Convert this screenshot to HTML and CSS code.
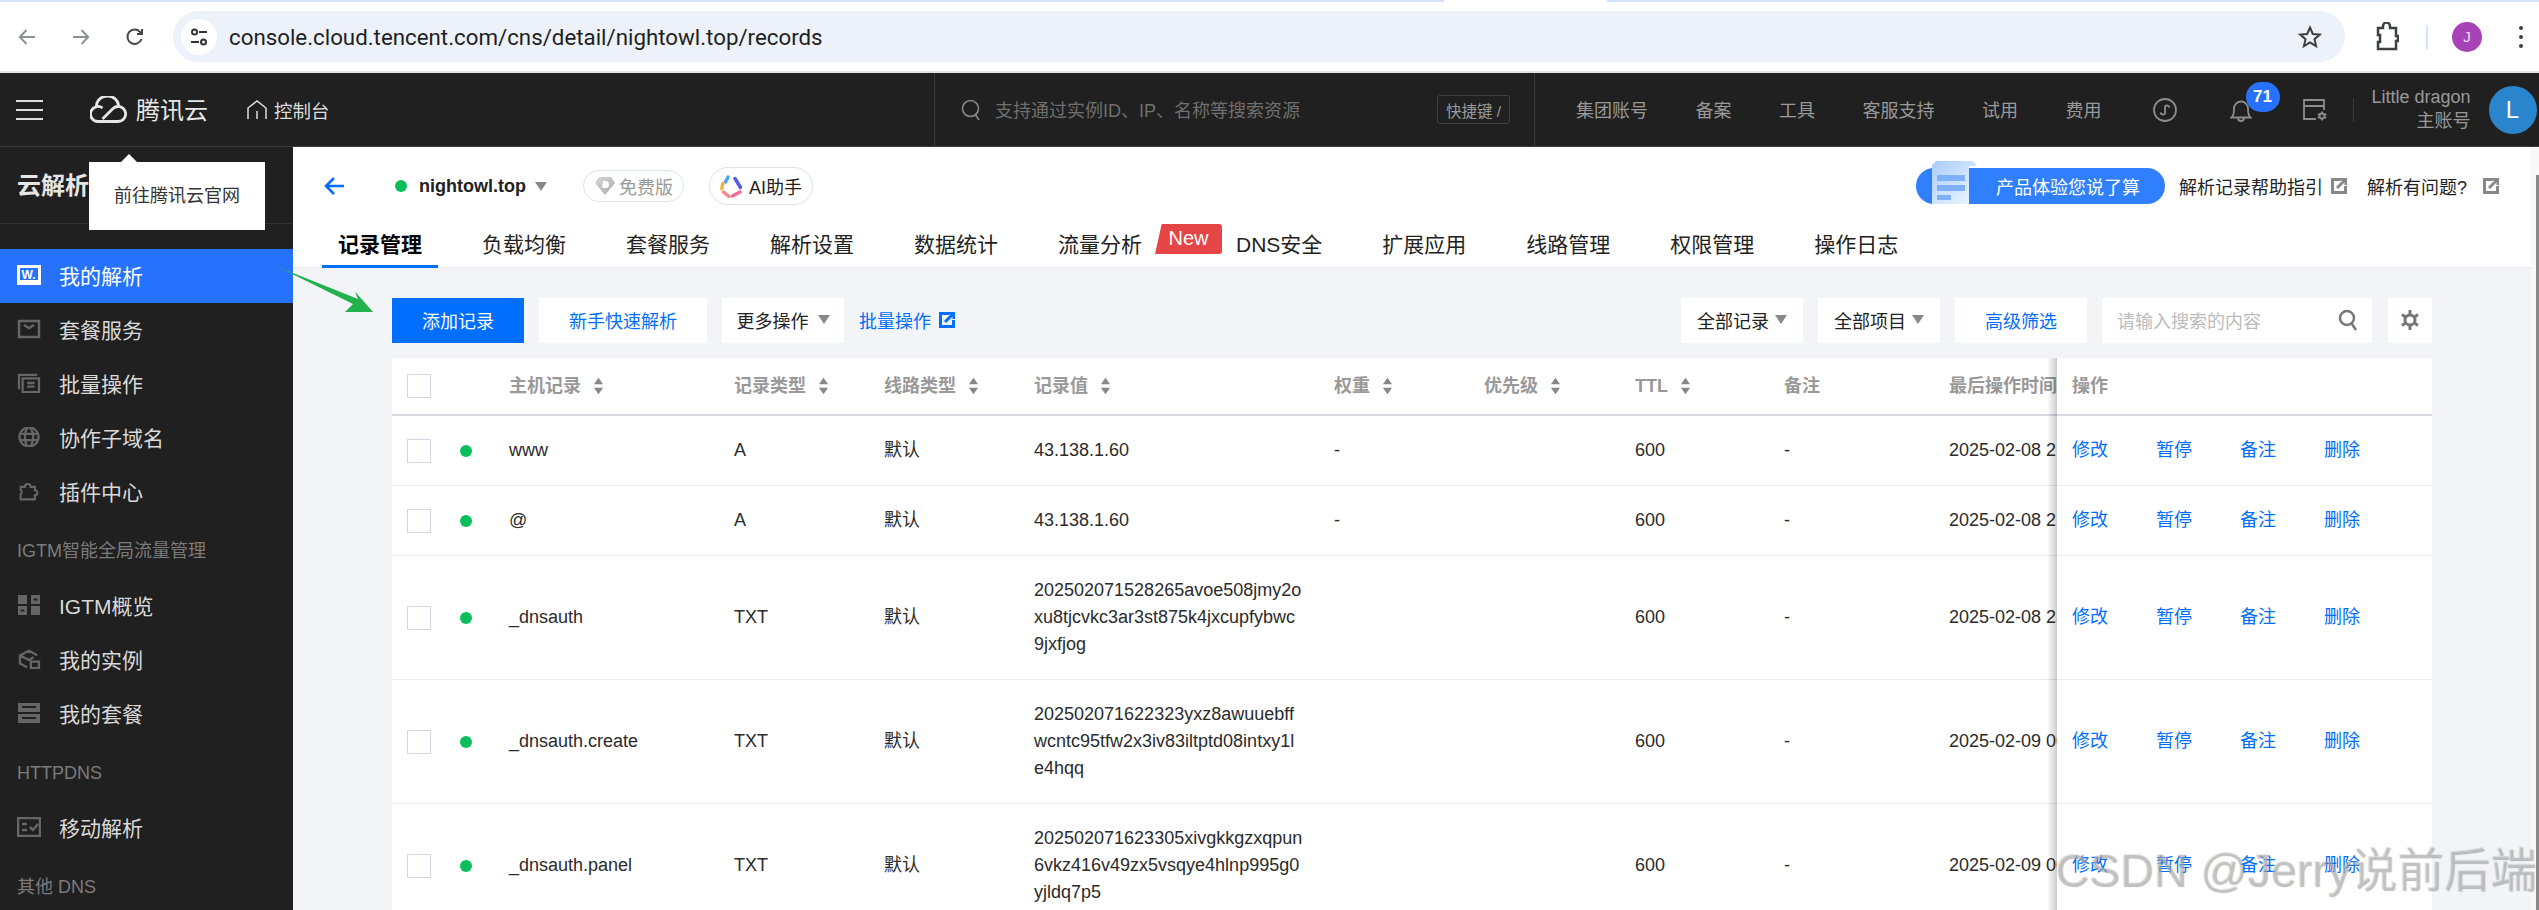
FILE: index.html
```html
<!DOCTYPE html>
<html lang="zh-CN">
<head>
    <meta charset="UTF-8">
    <title>nightowl.top - 云解析</title>
    <link rel="stylesheet" href="styles.css">
</head>
<body>
    <!-- browser chrome -->
    <div class="chrome">
        <div class="tabstrip"><span class="strip-a"></span><span class="strip-b"></span></div>
        <div class="browserbar">
            <svg class="nav-ico" viewBox="0 0 20 20"><path d="M18 10H3M9.500 3 2.800 10l6.700 7" stroke="#8e9094"/></svg>
            <svg class="nav-ico fwd" viewBox="0 0 20 20"><path d="M2 10h15M10.500 3l6.700 7-6.700 7" stroke="#8e9094"/></svg>
            <svg class="nav-ico reload" viewBox="0 0 20 20"><path d="M16.500 12a7.200 7.200 0 1 1-1.700-7.300L17 7M17 2v5h-5" stroke="#45474a"/></svg>
            <div class="omnibox">
                <span class="tune">
                    <svg viewBox="0 0 20 20" width="20" height="20"><circle cx="5.500" cy="5" r="2.500"/><path d="M10 5h8M2 15h8"/><circle cx="14.500" cy="15" r="2.500"/></svg>
                </span>
                <span class="url">console.cloud.tencent.com/cns/detail/nightowl.top/records</span>
                <svg class="star" viewBox="0 0 24 24"><path d="m12 2.500 2.800 6.500 7 .6-5.300 4.600 1.600 6.900-6.100-3.700-6.100 3.700 1.600-6.900L2.200 9.600l7-.6z"/></svg>
            </div>
            <svg class="puzzle" viewBox="0 0 24 30"><path d="M3 6h5V4a3 3 0 0 1 7 0v2h6v8h2v5h-2v8H3v-7h2v-7H3z"/></svg>
            <span class="bar-div"></span>
            <span class="profile">J</span>
            <span class="dots"><i></i><i></i><i></i></span>
        </div>
    </div>

    <!-- console header -->
    <header class="topnav">
        <div class="topnav-left">
            <span class="burger"><i></i><i></i><i></i></span>
            <svg class="logo" viewBox="0 0 37 27"><path d="M8 25.500H28A7.500 7.500 0 1 0 23 12.500L12.500 23M8 25.500A7.500 7.500 0 1 1 12.500 12M6.500 10.500A10.500 9.500 0 0 1 28.500 9.500"/></svg>
            <span class="brand">腾讯云</span>
            <svg class="home" viewBox="0 0 20 20"><path d="M1 19V8l9-7 9 7v11M10 11v8"/></svg>
            <span class="console-link">控制台</span>
        </div>
        <div class="topsearch">
            <svg class="search-ico" viewBox="0 0 20 22"><circle cx="9.500" cy="9.500" r="8"/><path d="m14.500 16 3.500 5"/></svg>
            <span class="topsearch-text">支持通过实例ID、IP、名称等搜索资源</span>
            <span class="kbd">快捷键 /</span>
        </div>
        <nav class="topmenu">
            <a>集团账号</a><a>备案</a><a>工具</a><a>客服支持</a><a>试用</a><a>费用</a>
        </nav>
        <svg class="mini-ico" viewBox="0 0 24 24"><circle cx="12" cy="12" r="11"/><path d="M7.500 14.500a2.500 2.500 0 0 0 4.500 1V8.500a2.500 2.500 0 0 1 4.500 1"/></svg>
        <span class="bell">
            <svg viewBox="0 0 22 26" width="22" height="26"><path d="M1.500 20.500c2-1.500 2.500-4 2.500-9a7 7 0 0 1 14 0c0 5 .5 7.500 2.500 9zM8 21a3 3 0 0 0 6 0"/></svg>
            <b class="badge">71</b>
        </span>
        <svg class="cog-box" viewBox="0 0 24 22"><path d="M13 20H1V1h20v10M1 7h20"/><circle cx="19" cy="17" r="2.500"/><path d="M19 12.500v2M19 19.500v2M14.800 15l1.800 1M23.200 15l-1.800 1M14.800 19l1.800-1M23.200 19l-1.800-1"/></svg>
        <span class="user-div"></span>
        <div class="user">
            <span>Little dragon</span>
            <span>主账号</span>
        </div>
        <span class="avatar">L</span>
    </header>

    <div class="layout">
        <aside class="sidebar">
            <div class="side-title">云解析</div>
            <ul class="side-list">
                <li class="side-item active">
                    <svg class="side-ico" viewBox="0 0 24 20"><rect width="24" height="20" fill="#fff"/><rect x="3" y="3" width="18" height="12" fill="#2672ff"/><text x="4.500" y="13.500" font-size="12" font-weight="700" fill="#fff" font-family="Liberation Sans">W.</text></svg>
                    我的解析
                </li>
                <li class="side-item">
                    <svg class="side-ico line" viewBox="0 0 24 20"><path d="M2 2h20v16H2zM7 6l5 3 5-3"/></svg>
                    套餐服务
                </li>
                <li class="side-item">
                    <svg class="side-ico line" viewBox="0 0 24 22"><path d="M1 18V2h20M5 6h18v15H5zM10 11h8M10 15h8"/></svg>
                    批量操作
                </li>
                <li class="side-item">
                    <svg class="side-ico line" viewBox="0 0 24 22"><circle cx="12" cy="11" r="10.500"/><ellipse cx="12" cy="11" rx="4.500" ry="10.500"/><path d="M2 7.500h20M2 14.500h20"/></svg>
                    协作子域名
                </li>
                <li class="side-item">
                    <svg class="side-ico line" viewBox="0 0 24 24"><path d="M2 7h5a3.500 3.500 0 0 1 7 0h5v4a3 3 0 0 1 0 6v5H2v-6a3 3 0 0 0 0-5z"/></svg>
                    插件中心
                </li>
                <li class="side-section">IGTM智能全局流量管理</li>
                <li class="side-item">
                    <svg class="side-ico fill" viewBox="0 0 24 20"><path fill-rule="evenodd" d="M1 0h9v9H1zM14 0h9v9h-9zM1 11h9v9H1zM14 11h9v9h-9zM16.500 3.500h4v2h-4zM3.500 14.500h4v2h-4z"/></svg>
                    IGTM概览
                </li>
                <li class="side-item">
                    <svg class="side-ico line" viewBox="0 0 24 22"><path d="M10 20 2 16V7l10-5 9 5M2 7l10 5 5-3M14 14h9v7h-9z"/></svg>
                    我的实例
                </li>
                <li class="side-item">
                    <svg class="side-ico fill" viewBox="0 0 24 20"><path d="M1 0h22v9H1zM1 11h22v9H1z"/><path d="M5 4h14M5 15h14" stroke="#202020" stroke-width="2"/></svg>
                    我的套餐
                </li>
                <li class="side-section">HTTPDNS</li>
                <li class="side-item">
                    <svg class="side-ico line" viewBox="0 0 24 20"><path d="M1 1h22v18H1zM5 7h5M5 13h5M13 10l3 3 5-6"/></svg>
                    移动解析
                </li>
                <li class="side-section">其他 DNS</li>
            </ul>
        </aside>

        <main class="content">
            <section class="panel">
                <div class="panel-top">
                    <svg class="back" viewBox="0 0 22 20"><path d="M21 10H3M11 2l-8 8 8 8"/></svg>
                    <span class="status-dot domain-dot"></span>
                    <strong class="domain">nightowl.top</strong>
                    <span class="caret"></span>
                    <span class="pill free">
                        <svg viewBox="0 0 22 20" width="22" height="20"><defs><linearGradient id="gem" x1="0" y1="0" x2="1" y2="1"><stop offset="0" stop-color="#d8d8d8"/><stop offset="1" stop-color="#a8a8a8"/></linearGradient></defs><path d="M5 1h12l4 6-10 12L1 7z" fill="url(#gem)"/><path d="M9 5h2.500a3.500 3.500 0 0 1 0 7H8z" fill="#fff"/></svg>
                        免费版
                    </span>
                    <span class="pill ai">
                        <svg viewBox="0 0 23 23" width="23" height="23" fill="none" stroke-width="3.500" stroke-linecap="round"><path d="M8 2 5.500 7" stroke="#4aa8f0"/><path d="m15 3.500 5.500 9" stroke="#5a5ae6"/><path d="m20 17-7.500 4" stroke="#f06a9a"/><path d="M9 21.500 3.500 17" stroke="#f58a8a"/><path d="m1.800 13.500 1-5" stroke="#f5b23c"/></svg>
                        AI助手
                    </span>
                    <div class="panel-links">
                        <span class="promo">
                            <svg class="promo-doc" viewBox="0 0 44 43"><defs><linearGradient id="docg" x1="0" y1="0" x2="1" y2="1"><stop offset="0" stop-color="#a9cdff"/><stop offset="1" stop-color="#f0f6ff"/></linearGradient></defs><path d="M4 0h34c4 0 6 2 6 5h-7v38H0V4z" fill="url(#docg)"/><path d="M5 14h28v6H5zM5 24h28v6H5zM5 34h14v5H5z" fill="#7fb0fb"/></svg>
                            产品体验您说了算
                        </span>
                        <a class="help">解析记录帮助指引<svg class="ext" viewBox="0 0 16 16"><path d="M10 1.500H1.500v13h13V8M6 10l8-8M9 1h6v6"/></svg></a>
                        <a class="help">解析有问题?<svg class="ext" viewBox="0 0 16 16"><path d="M10 1.500H1.500v13h13V8M6 10l8-8M9 1h6v6"/></svg></a>
                    </div>
                </div>
                <div class="tabs">
                    <a class="tab current">记录管理</a>
                    <a class="tab">负载均衡</a>
                    <a class="tab">套餐服务</a>
                    <a class="tab">解析设置</a>
                    <a class="tab">数据统计</a>
                    <a class="tab has-new">流量分析<span class="new-flag">New</span></a>
                    <a class="tab">DNS安全</a>
                    <a class="tab">扩展应用</a>
                    <a class="tab">线路管理</a>
                    <a class="tab">权限管理</a>
                    <a class="tab">操作日志</a>
                </div>
            </section>

            <div class="toolbar">
                <button class="btn primary w-add">添加记录</button>
                <button class="btn link w-quick">新手快速解析</button>
                <button class="btn w-more">更多操作<span class="caret"></span></button>
                <a class="batch">批量操作<svg class="ext blue" viewBox="0 0 16 16"><path d="M10 1.500H1.500v13h13V8M6 10l8-8M9 1h6v6"/></svg></a>
                <div class="toolbar-right">
                    <button class="btn w-sel">全部记录<span class="caret"></span></button>
                    <button class="btn w-sel">全部项目<span class="caret"></span></button>
                    <button class="btn link w-adv">高级筛选</button>
                    <div class="searchbox">
                        <span>请输入搜索的内容</span>
                        <svg viewBox="0 0 20 22" width="20" height="22"><circle cx="9" cy="9" r="7"/><path d="m14 15 4 6"/></svg>
                    </div>
                    <button class="btn w-gear">
                        <svg viewBox="0 0 20 22" width="20" height="22"><path d="M10 1v4M10 17v4M2 5.500 5.500 8M18 5.500 14.500 8M2 16.500 5.500 14M18 16.500 14.500 14"/><circle cx="10" cy="11" r="5"/></svg>
                    </button>
                </div>
            </div>

            <div class="records">
                <div class="row head">
                    <div class="cell"><span class="check"></span></div>
                    <div class="cell"></div>
                    <div class="cell">主机记录<svg class="sort" viewBox="0 0 12 20"><path d="M6 1l5 7H1zM6 19l-5-7h10z"/></svg></div>
                    <div class="cell">记录类型<svg class="sort" viewBox="0 0 12 20"><path d="M6 1l5 7H1zM6 19l-5-7h10z"/></svg></div>
                    <div class="cell">线路类型<svg class="sort" viewBox="0 0 12 20"><path d="M6 1l5 7H1zM6 19l-5-7h10z"/></svg></div>
                    <div class="cell">记录值<svg class="sort" viewBox="0 0 12 20"><path d="M6 1l5 7H1zM6 19l-5-7h10z"/></svg></div>
                    <div class="cell">权重<svg class="sort" viewBox="0 0 12 20"><path d="M6 1l5 7H1zM6 19l-5-7h10z"/></svg></div>
                    <div class="cell">优先级<svg class="sort" viewBox="0 0 12 20"><path d="M6 1l5 7H1zM6 19l-5-7h10z"/></svg></div>
                    <div class="cell">TTL<svg class="sort" viewBox="0 0 12 20"><path d="M6 1l5 7H1zM6 19l-5-7h10z"/></svg></div>
                    <div class="cell">备注</div>
                    <div class="cell clip">最后操作时间</div>
                    <div class="cell op">操作</div>
                </div>

                <div class="row">
                    <div class="cell"><span class="check"></span></div>
                    <div class="cell"><span class="status-dot"></span></div>
                    <div class="cell">www</div>
                    <div class="cell">A</div>
                    <div class="cell">默认</div>
                    <div class="cell val">43.138.1.60</div>
                    <div class="cell">-</div>
                    <div class="cell"></div>
                    <div class="cell">600</div>
                    <div class="cell">-</div>
                    <div class="cell clip">2025-02-08 21:30:12</div>
                    <div class="cell op"><a>修改</a><a>暂停</a><a>备注</a><a>删除</a></div>
                </div>
                <div class="row">
                    <div class="cell"><span class="check"></span></div>
                    <div class="cell"><span class="status-dot"></span></div>
                    <div class="cell">@</div>
                    <div class="cell">A</div>
                    <div class="cell">默认</div>
                    <div class="cell val">43.138.1.60</div>
                    <div class="cell">-</div>
                    <div class="cell"></div>
                    <div class="cell">600</div>
                    <div class="cell">-</div>
                    <div class="cell clip">2025-02-08 21:30:12</div>
                    <div class="cell op"><a>修改</a><a>暂停</a><a>备注</a><a>删除</a></div>
                </div>
                <div class="row">
                    <div class="cell"><span class="check"></span></div>
                    <div class="cell"><span class="status-dot"></span></div>
                    <div class="cell">_dnsauth</div>
                    <div class="cell">TXT</div>
                    <div class="cell">默认</div>
                    <div class="cell val">202502071528265avoe508jmy2o<br>xu8tjcvkc3ar3st875k4jxcupfybwc<br>9jxfjog</div>
                    <div class="cell"></div>
                    <div class="cell"></div>
                    <div class="cell">600</div>
                    <div class="cell">-</div>
                    <div class="cell clip">2025-02-08 23:28:40</div>
                    <div class="cell op"><a>修改</a><a>暂停</a><a>备注</a><a>删除</a></div>
                </div>
                <div class="row">
                    <div class="cell"><span class="check"></span></div>
                    <div class="cell"><span class="status-dot"></span></div>
                    <div class="cell">_dnsauth.create</div>
                    <div class="cell">TXT</div>
                    <div class="cell">默认</div>
                    <div class="cell val">202502071622323yxz8awuuebff<br>wcntc95tfw2x3iv83iltptd08intxy1l<br>e4hqq</div>
                    <div class="cell"></div>
                    <div class="cell"></div>
                    <div class="cell">600</div>
                    <div class="cell">-</div>
                    <div class="cell clip">2025-02-09 00:22:51</div>
                    <div class="cell op"><a>修改</a><a>暂停</a><a>备注</a><a>删除</a></div>
                </div>
                <div class="row">
                    <div class="cell"><span class="check"></span></div>
                    <div class="cell"><span class="status-dot"></span></div>
                    <div class="cell">_dnsauth.panel</div>
                    <div class="cell">TXT</div>
                    <div class="cell">默认</div>
                    <div class="cell val">202502071623305xivgkkgzxqpun<br>6vkz416v49zx5vsqye4hlnp995g0<br>yjldq7p5</div>
                    <div class="cell"></div>
                    <div class="cell"></div>
                    <div class="cell">600</div>
                    <div class="cell">-</div>
                    <div class="cell clip">2025-02-09 00:23:33</div>
                    <div class="cell op"><a>修改</a><a>暂停</a><a>备注</a><a>删除</a></div>
                </div>
            </div>
        </main>
        <div class="scrollbar"></div>
    </div>

    <!-- things lying over the page -->
    <div class="tooltip">前往腾讯云官网</div>
    <svg class="green-arrow" viewBox="0 0 95 45"><path d="M0 0 80 32 77 24.600 95 45H67L75 37z"/></svg>
    <div class="watermark">CSDN @Jerry说前后端</div>
</body>
</html>
```

FILE: styles.css
```css
* {
    box-sizing: border-box;
}

html, body {
    margin: 0;
    height: 910px;
    overflow: hidden;
}

body {
    font-family: "Liberation Sans", "Noto Sans CJK SC", sans-serif;
    font-size: 18px;
    color: #222;
    background: #f2f4f8;
    display: flex;
    flex-direction: column;
}

ul {
    list-style: none;
    margin: 0;
    padding: 0;
}

svg {
    flex: none;
}

/* browser chrome */
.chrome {
    height: 73px;
    flex: none;
    background: #fff;
    border-bottom: 2px solid #e3e3e3;
}

.tabstrip {
    height: 2px;
    display: flex;
    justify-content: space-between;
}

.strip-a {
    width: 1444px;
    background: #d3e3fd;
}

.strip-b {
    width: 932px;
    background: #d3e3fd;
}

.browserbar {
    height: 69px;
    display: flex;
    align-items: center;
    padding-left: 17px;
}

.nav-ico {
    width: 20px;
    height: 20px;
    fill: none;
    stroke-width: 2;
}

.fwd {
    margin-left: 34px;
}

.reload {
    margin-left: 34px;
}

.omnibox {
    width: 2172px;
    height: 51px;
    margin-left: 28px;
    padding: 0 23px 0 8px;
    background: #ecf1fa;
    border-radius: 26px;
    display: flex;
    align-items: center;
}

.tune {
    width: 36px;
    height: 36px;
    background: #fff;
    border-radius: 50%;
    display: flex;
    align-items: center;
    justify-content: center;
}

.tune svg {
    fill: none;
    stroke: #333;
    stroke-width: 2;
}

.url {
    margin-left: 12px;
    font-family: Roboto, sans-serif;
    font-size: 22.300px;
    color: #1f1f1f;
}

.star {
    width: 24px;
    height: 24px;
    margin-left: auto;
    fill: none;
    stroke: #3c3f43;
    stroke-width: 2;
}

.puzzle {
    width: 24px;
    height: 30px;
    margin-left: 30px;
    fill: none;
    stroke: #3c3f43;
    stroke-width: 2.500;
}

.bar-div {
    width: 2px;
    height: 24px;
    margin-left: 27px;
    background: #d3e3fd;
}

.profile {
    width: 30px;
    height: 30px;
    margin-left: 24px;
    border-radius: 50%;
    background: #a742b9;
    color: #f2d8f5;
    font-size: 15px;
    display: flex;
    align-items: center;
    justify-content: center;
}

.dots {
    margin-left: 37px;
    display: flex;
    flex-direction: column;
    gap: 5px;
}

.dots i {
    width: 4px;
    height: 4px;
    border-radius: 50%;
    background: #3c3f43;
}

/* console header */
.topnav {
    height: 74px;
    flex: none;
    background: #202020;
    border-bottom: 1px solid #3a3a3a;
    color: #999;
    display: flex;
    align-items: center;
}

.topnav-left {
    width: 934px;
    padding-left: 16px;
    display: flex;
    align-items: center;
}

.burger {
    width: 27px;
    display: flex;
    flex-direction: column;
    gap: 7px;
}

.burger i {
    height: 2px;
    background: #ddd;
}

.logo {
    width: 37px;
    height: 27px;
    margin-left: 47px;
    fill: none;
    stroke: #e6e6e6;
    stroke-width: 2.800;
}

.brand {
    margin-left: 9px;
    padding-bottom: 2px;
    font-size: 24px;
    color: #e6e6e6;
}

.home {
    width: 20px;
    height: 20px;
    margin-left: 39px;
    fill: none;
    stroke: #ddd;
    stroke-width: 1.500;
}

.console-link {
    margin-left: 7px;
    font-size: 18.500px;
    color: #ddd;
}

.topsearch {
    width: 601px;
    height: 100%;
    padding: 0 24px 0 26px;
    border-left: 1px solid #3a3a3a;
    border-right: 1px solid #3a3a3a;
    display: flex;
    align-items: center;
}

.search-ico {
    width: 20px;
    height: 22px;
    fill: none;
    stroke: #888;
    stroke-width: 1.600;
}

.topsearch-text {
    margin-left: 14px;
    padding-bottom: 2px;
    color: #6f6f6f;
}

.kbd {
    margin-left: auto;
    width: 73px;
    height: 29px;
    border: 1px solid #3f3f3f;
    border-radius: 3px;
    font-size: 15.500px;
    color: #999;
    display: flex;
    align-items: center;
    justify-content: center;
}

.topmenu {
    margin-left: 41px;
    padding-bottom: 2px;
    display: flex;
    gap: 47.500px;
}

.mini-ico {
    width: 24px;
    height: 24px;
    margin-left: 51px;
    fill: none;
    stroke: #8c8c8c;
    stroke-width: 1.800;
}

.bell {
    margin-left: 53px;
    position: relative;
    display: flex;
}

.bell svg {
    fill: none;
    stroke: #8c8c8c;
    stroke-width: 1.800;
}

.badge {
    position: absolute;
    left: 16px;
    top: -15px;
    width: 34px;
    height: 30px;
    border-radius: 15px;
    background: #2672ff;
    color: #fff;
    font-size: 17px;
    display: flex;
    align-items: center;
    justify-content: center;
}

.cog-box {
    width: 24px;
    height: 22px;
    margin-left: 51px;
    fill: none;
    stroke: #8c8c8c;
    stroke-width: 1.800;
}

.user-div {
    width: 1px;
    height: 24px;
    margin-left: 26px;
    background: #3a3a3a;
}

.user {
    width: 100px;
    margin-left: 17px;
    display: flex;
    flex-direction: column;
    align-items: flex-end;
    gap: 5px;
    line-height: 19px;
    white-space: nowrap;
}

.avatar {
    width: 48px;
    height: 48px;
    margin-left: 18px;
    border-radius: 50%;
    background: #2a85cc;
    color: #fff;
    font-size: 24px;
    display: flex;
    align-items: center;
    justify-content: center;
}

/* below the header */
.layout {
    flex: 1;
    min-height: 0;
    display: flex;
}

.sidebar {
    width: 293px;
    flex: none;
    background: #202020;
    color: #d9d9d9;
    font-size: 21px;
}

.side-title {
    height: 77px;
    padding-left: 17px;
    border-bottom: 1px solid #333;
    font-size: 24px;
    font-weight: 700;
    line-height: 78px;
    color: #e6e6e6;
}

.side-list {
    padding-top: 25px;
}

.side-item {
    height: 54px;
    padding-left: 17px;
    padding-bottom: 2px;
    display: flex;
    align-items: center;
    gap: 18px;
}

.side-item.active {
    background: #2672ff;
    color: #fff;
}

.side-ico {
    width: 24px;
    height: 20px;
}

.side-ico.line {
    fill: none;
    stroke: #666;
    stroke-width: 2.500;
}

.side-ico.fill {
    fill: #666;
}

.side-section {
    height: 60px;
    padding: 5px 0 0 17px;
    font-size: 18px;
    line-height: 55px;
    color: #7b7b7b;
}

.content {
    flex: 1;
    min-width: 0;
}

.scrollbar {
    width: 8px;
    flex: none;
    background: #f8f8fa;
    position: relative;
}

.scrollbar::after {
    content: "";
    position: absolute;
    top: 28px;
    bottom: 0;
    right: 0;
    width: 3px;
    background: #8a8a8a;
}

/* page head with tabs */
.panel {
    height: 121px;
    padding-left: 30px;
    padding-right: 32px;
    background: #fff;
    border-bottom: 1px solid #e8eaf0;
}

.panel-top {
    height: 78px;
    display: flex;
    align-items: center;
}

.back {
    width: 22px;
    height: 20px;
    fill: none;
    stroke: #006eff;
    stroke-width: 2.500;
}

.status-dot {
    width: 12px;
    height: 12px;
    border-radius: 50%;
    background: #0abf5b;
}

.domain-dot {
    margin-left: 50px;
}

.domain {
    margin-left: 12px;
    font-size: 18px;
}

.caret {
    display: inline-block;
    width: 0;
    height: 0;
    margin-left: 9px;
    border-left: 6px solid transparent;
    border-right: 6px solid transparent;
    border-top: 9px solid #888;
}

.pill {
    margin-left: 36px;
    height: 32px;
    padding: 0 10px;
    border: 1px solid #dfe3ec;
    border-radius: 17px;
    color: #999;
    display: flex;
    align-items: center;
    gap: 3px;
}

.pill.ai {
    margin-left: 25px;
    height: 38px;
    border-radius: 19px;
    color: #222;
    gap: 6px;
}

.panel-links {
    margin-left: auto;
    display: flex;
    align-items: center;
}

.promo {
    width: 249px;
    height: 36px;
    margin-right: 14px;
    padding-left: 80px;
    border-radius: 18px;
    background: #2f7fff;
    color: #fff;
    position: relative;
    display: flex;
    align-items: center;
}

.promo-doc {
    position: absolute;
    left: 16px;
    bottom: 0;
    width: 44px;
    height: 43px;
}

.help {
    margin-right: 20px;
    color: #222;
    display: flex;
    align-items: center;
}

.help:last-child {
    margin-right: 0;
}

.ext {
    width: 16px;
    height: 16px;
    margin-left: 8px;
    fill: none;
    stroke: #888;
    stroke-width: 3;
}

.help:last-child .ext {
    margin-left: 16px;
}

.ext.blue {
    stroke: #006eff;
}

.tabs {
    margin-left: -1px;
    display: flex;
    gap: 28px;
    font-size: 21px;
}

.tab {
    height: 43px;
    padding: 0 16px;
    border-bottom: 3px solid transparent;
    line-height: 40px;
    color: #222;
    position: relative;
}

.tab.current {
    font-weight: 700;
    color: #000;
    border-bottom-color: #006eff;
}

.tab.has-new {
    margin-right: 34px;
}

.new-flag {
    position: absolute;
    left: 113px;
    top: -1px;
    width: 67px;
    height: 30px;
    background: #e54545;
    border-radius: 3px 3px 3px 0;
    color: #fff;
    font-size: 20px;
    line-height: 28px;
    text-align: center;
    clip-path: polygon(10% 0, 100% 0, 100% 100%, 0 100%);
}

/* toolbar */
.toolbar {
    margin: 30px 99px 15px;
    display: flex;
    gap: 15px;
}

.toolbar-right {
    margin-left: auto;
    display: flex;
    gap: 15px;
}

.btn {
    height: 45px;
    padding: 0 0 2px;
    border: 0;
    background: #fff;
    color: #222;
    font: inherit;
    display: flex;
    align-items: center;
    justify-content: center;
}

.btn.primary {
    background: #006eff;
    color: #fff;
}

.btn.link {
    color: #006eff;
}

.w-add {
    width: 132px;
}

.w-quick {
    width: 168px;
}

.w-more {
    width: 122px;
}

.w-sel {
    width: 122px;
}

.w-sel .caret {
    margin-left: 6px;
}

.w-adv {
    width: 132px;
}

.w-gear {
    width: 44px;
    margin-left: 1px;
}

.w-gear svg {
    fill: none;
    stroke: #777;
    stroke-width: 3;
}

.batch {
    padding-bottom: 2px;
    color: #006eff;
    display: flex;
    align-items: center;
}

.searchbox {
    width: 270px;
    height: 45px;
    padding: 0 14px 2px 15px;
    background: #fff;
    color: #bbb;
    display: flex;
    align-items: center;
    justify-content: space-between;
}

.searchbox svg {
    fill: none;
    stroke: #777;
    stroke-width: 2.500;
}

/* records table */
.records {
    margin: 0 99px;
    background: #fff;
    position: relative;
}

/* shadow of the pinned action column */
.records::after {
    content: "";
    position: absolute;
    top: 0;
    bottom: 0;
    right: 375px;
    width: 10px;
    background: linear-gradient(90deg, rgba(0, 0, 0, 0), rgba(0, 0, 0, 0.2));
}

.row {
    min-height: 70px;
    display: grid;
    grid-template-columns: 68px 49px 225px 150px 150px 300px 150px 151px 149px 165px 108px 375px;
    border-bottom: 1px solid #e8eaf0;
    color: #2b2b2b;
}

.row.head {
    min-height: 58px;
    border-bottom: 2px solid #d8dae2;
    color: #999;
    font-weight: 700;
}

.cell {
    min-width: 0;
    display: flex;
    align-items: center;
    white-space: nowrap;
    line-height: 27px;
}

.cell:first-child {
    padding-left: 15px;
}

.val {
    display: block;
    padding: 21px 0;
    align-self: center;
}

.clip {
    overflow: hidden;
}

.op {
    padding-left: 15px;
    gap: 48px;
    color: #006eff;
}

.head .op {
    color: #999;
}

.check {
    width: 24px;
    height: 24px;
    background: #fff;
    border: 1px solid #d2d6e2;
}

.sort {
    width: 11px;
    height: 20px;
    margin-left: 12px;
    fill: #888;
}

/* overlays */
.tooltip {
    position: absolute;
    left: 89px;
    top: 162px;
    width: 176px;
    height: 68px;
    padding-top: 20px;
    background: #fff;
    color: #333;
    text-align: center;
    line-height: 28px;
}

.tooltip::before {
    content: "";
    position: absolute;
    left: 32px;
    top: -8px;
    border-left: 8px solid transparent;
    border-right: 8px solid transparent;
    border-bottom: 8px solid #fff;
}

.green-arrow {
    position: absolute;
    left: 278px;
    top: 267px;
    width: 95px;
    height: 45px;
    fill: #22b14c;
}

.watermark {
    position: absolute;
    left: 2055px;
    top: 840px;
    font-size: 46.500px;
    line-height: 60px;
    white-space: nowrap;
    color: rgba(205, 205, 205, 0.4);
    text-shadow: 1px 1px 1px rgba(120, 120, 120, 0.5);
}
```
